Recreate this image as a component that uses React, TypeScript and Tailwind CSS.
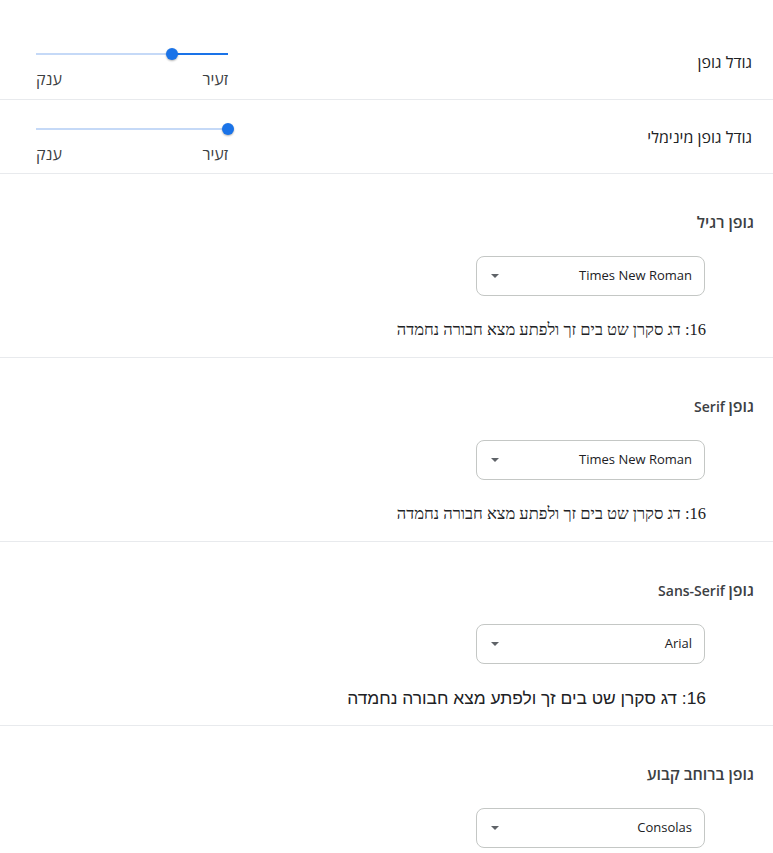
import React from "react";

const UI = "font-['Open_Sans','Segoe_UI','Liberation_Sans',sans-serif]";
const SAMPLE = "16: דג סקרן שט בים זך ולפתע מצא חבורה נחמדה";

function He({ children, className = "" }: { children: React.ReactNode; className?: string }) {
  return <span className={`text-[16px] ${className}`}>{children}</span>;
}

function Slider({ fromRight }: { fromRight: number }) {
  // fromRight = distance of the thumb centre from the right end of the track
  return (
    <div className="w-[192px]">
      <div className="relative h-4">
        <div className="absolute left-0 right-0 top-[7px] h-[2px] bg-[#c5d9f7]" />
        <div
          className="absolute right-0 top-[7px] h-[2px] bg-[#1a73e8]"
          style={{ width: fromRight }}
        />
        <div
          className="absolute top-[2px] h-3 w-3 -mr-[6px] rounded-full bg-[#1a73e8] shadow-[0_1px_2px_rgba(0,0,0,0.3)]"
          style={{ right: fromRight }}
        />
      </div>
      <div className="mt-[9px] flex h-4 items-center justify-between leading-4 text-[#3c4043]">
        <He>זעיר</He>
        <He>ענק</He>
      </div>
    </div>
  );
}

function SizeRow({ label, fromRight, first }: { label: string; fromRight: number; first?: boolean }) {
  return (
    <div
      className={`flex h-[74px] items-center justify-between pl-[36px] pr-[21px] ${
        first ? "" : "border-t border-[#e8eaed]"
      }`}
    >
      <div className="leading-5 text-[#202124]">
        <He>{label}</He>
      </div>
      <div className="mt-[9px]">
        <Slider fromRight={fromRight} />
      </div>
    </div>
  );
}

function FontSection({
  title,
  latin,
  value,
  sampleFont,
  showSample = true,
}: {
  title: string;
  latin?: string;
  value: string;
  sampleFont?: string;
  showSample?: boolean;
}) {
  return (
    <div className="border-t border-[#e8eaed] pt-[38px] pb-[17px] pr-[19px]">
      <div className="h-5 leading-5 font-semibold text-[#3c4043]">
        <He>{title}</He>
        {latin && <span className="text-[14px]"> {latin}</span>}
      </div>
      <div className="mr-[49px] mt-[24px] flex h-10 w-[229px] items-center justify-between rounded-lg border border-[#c4c7c5] pr-[12px] pl-[14px]">
        <span className="text-[13px] text-[#202124]">{value}</span>
        <span className="h-0 w-0 border-x-[4px] border-t-[4px] border-x-transparent border-t-[#5f6368]" />
      </div>
      {showSample && (
        <div className={`mr-[48px] mt-[24px] h-5 leading-5 text-[#202124] ${sampleFont}`}>
          {SAMPLE}
        </div>
      )}
    </div>
  );
}

export default function App() {
  return (
    <div dir="rtl" className={`min-h-screen w-full overflow-hidden bg-white pt-[25px] ${UI}`}>
      <SizeRow label="גודל גופן" fromRight={56} first />
      <SizeRow label="גודל גופן מינימלי" fromRight={0} />

      <FontSection
        title="גופן רגיל"
        value="Times New Roman"
        sampleFont="font-['Liberation_Serif',serif] text-[16.5px]"
      />
      <FontSection
        title="גופן"
        latin="Serif"
        value="Times New Roman"
        sampleFont="font-['Liberation_Serif',serif] text-[16.5px]"
      />
      <FontSection
        title="גופן"
        latin="Sans-Serif"
        value="Arial"
        sampleFont="font-['Liberation_Sans',sans-serif] text-[17.4px]"
      />
      <FontSection title="גופן ברוחב קבוע" value="Consolas" showSample={false} />
    </div>
  );
}
